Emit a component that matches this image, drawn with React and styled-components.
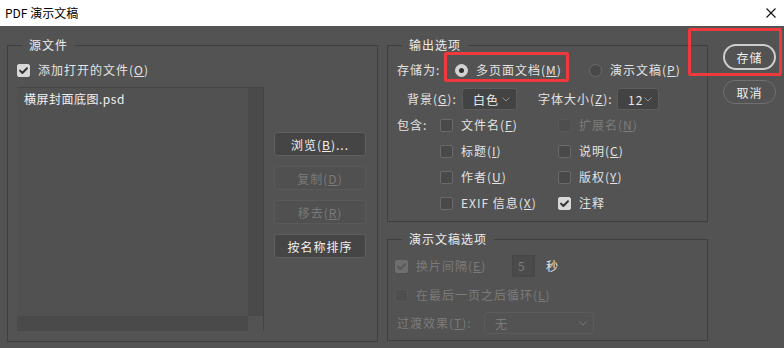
import React from "react";
import styled, { createGlobalStyle } from "styled-components";

//* Global *//
const GlobalStyle = createGlobalStyle`
  html, body {
    margin: 0;
    padding: 0;
    background: #535353;
  }
  body {
    font-family: "Noto Sans CJK SC", "Noto Sans", sans-serif;
    font-size: 12px;
  }
`;

//* Small parts *//
const CheckMark = ({ color }) => (
  <svg width="13" height="13" viewBox="0 0 13 13">
    <polyline
      points="3,6.6 5.4,9 10,4.2"
      fill="none"
      stroke={color}
      strokeWidth="2"
      strokeLinecap="round"
      strokeLinejoin="round"
    />
  </svg>
);

const Check = ({ checked, disabled }) => (
  <CheckBox $checked={checked} $disabled={disabled}>
    {checked && <CheckMark color={disabled ? "#585858" : "#363636"} />}
  </CheckBox>
);

const Chevron = () => (
  <svg width="8" height="5" viewBox="0 0 8 5">
    <polyline points="0.5,0.5 4,4 7.5,0.5" fill="none" stroke="#8e8e8e" strokeWidth="1" />
  </svg>
);

const Key = ({ children }) => <u>{children}</u>;

const CheckItem = ({ checked, disabled, children }) => (
  <Option>
    <Check checked={checked} disabled={disabled} />
    <Label $disabled={disabled}>{children}</Label>
  </Option>
);

const App = () => {
  return (
    <Window>
      <GlobalStyle />
      <TitleBar>
        <Title>PDF 演示文稿</Title>
        <svg width="10" height="10" viewBox="0 0 10 10">
          <path d="M0.5 0.5 L9.5 9.5 M9.5 0.5 L0.5 9.5" stroke="#111" strokeWidth="1.1" />
        </svg>
      </TitleBar>

      <Main>
        <Group $w={371} $pad="9px 11px 10px 9px">
          <Legend $left={5}>源文件</Legend>
          <Option>
            <Check checked />
            <Label>
              添加打开的文件(<Key>O</Key>)
            </Label>
          </Option>
          <SourceArea>
            <ListBox>
              <ListItems>
                <ListItem>横屏封面底图.psd</ListItem>
              </ListItems>
              <VScroll />
              <HScroll />
            </ListBox>
            <ButtonColumn>
              <Button>
                浏览(<Key>B</Key>)...
              </Button>
              <Button disabled>
                复制(<Key>D</Key>)
              </Button>
              <Button disabled>
                移去(<Key>R</Key>)
              </Button>
              <Button>按名称排序</Button>
            </ButtonColumn>
          </SourceArea>
        </Group>

        <MiddleColumn>
          <Group $w={321} $pad="5px 9px 5px 9px">
            <Legend $left={5}>输出选项</Legend>
            <Row $h={24}>
              <FieldLabel $w={58}>存储为:</FieldLabel>
              <Option $w={134}>
                <Radio $on />
                <Label>
                  多页面文档(<Key>M</Key>)
                </Label>
              </Option>
              <Option>
                <Radio />
                <Label>
                  演示文稿(<Key>P</Key>)
                </Label>
              </Option>
            </Row>
            <Row $h={22} $top={6} $left={10}>
              <FieldLabel $w={55}>
                背景(<Key>G</Key>):
              </FieldLabel>
              <Select $w={55}>
                <span>白色</span>
                <Chevron />
              </Select>
              <FieldLabel $w={79} $left={21}>
                字体大小(<Key>Z</Key>):
              </FieldLabel>
              <Select $w={42}>
                <span>12</span>
                <Chevron />
              </Select>
            </Row>
            <IncludeGrid>
              <FieldLabel>包含:</FieldLabel>
              <CheckItem>
                文件名(<Key>F</Key>)
              </CheckItem>
              <CheckItem disabled>
                扩展名(<Key>N</Key>)
              </CheckItem>
              <span />
              <CheckItem>
                标题(<Key>I</Key>)
              </CheckItem>
              <CheckItem>
                说明(<Key>C</Key>)
              </CheckItem>
              <span />
              <CheckItem>
                作者(<Key>U</Key>)
              </CheckItem>
              <CheckItem>
                版权(<Key>Y</Key>)
              </CheckItem>
              <span />
              <CheckItem>
                EXIF 信息(<Key>X</Key>)
              </CheckItem>
              <CheckItem checked>注释</CheckItem>
            </IncludeGrid>
          </Group>

          <Group $w={321} $pad="8px 9px 6px 7px" $top={9}>
            <Legend $left={7}>演示文稿选项</Legend>
            <Row $h={22}>
              <Option>
                <Check checked disabled />
                <Label $disabled $w={96}>
                  换片间隔(<Key>E</Key>)
                </Label>
              </Option>
              <NumberBox>5</NumberBox>
              <Label>秒</Label>
            </Row>
            <Row $h={22} $top={7}>
              <CheckItem disabled>
                在最后一页之后循环(<Key>L</Key>)
              </CheckItem>
            </Row>
            <Row $h={22} $top={6} $left={2}>
              <FieldLabel $w={87} $disabled>
                过渡效果(<Key>T</Key>):
              </FieldLabel>
              <Select $w={110} $disabled>
                <span>无</span>
                <Chevron />
              </Select>
            </Row>
          </Group>
        </MiddleColumn>

        <ActionColumn>
          <PillButton $primary>存储</PillButton>
          <PillButton>取消</PillButton>
        </ActionColumn>
      </Main>

      <Highlight style={{ left: 444, top: 52, width: 125, height: 30 }} />
      <Highlight style={{ left: 688, top: 28, width: 94, height: 48 }} />
    </Window>
  );
};

export default App;

//* Styled Components *//

const Window = styled.div`
  position: relative;
  width: 784px;
  height: 348px;
  overflow: hidden;
  background: #535353;
  display: flex;
  flex-direction: column;
`;

const TitleBar = styled.div`
  height: 26px;
  flex: none;
  background: #ffffff;
  display: flex;
  align-items: center;
  justify-content: space-between;
  padding: 0 8px 0 5px;
`;

const Title = styled.span`
  color: #000;
  font-size: 12px;
  line-height: 16px;
`;

const Main = styled.div`
  display: flex;
  align-items: flex-start;
  padding: 11px 0 0 7px;
`;

const Group = styled.fieldset`
  box-sizing: border-box;
  width: ${(p) => p.$w}px;
  min-width: 0;
  margin: ${(p) => p.$top || 0}px 0 0 0;
  padding: ${(p) => p.$pad};
  border: 1px solid #3f3f3f;
`;

const Legend = styled.legend`
  margin-left: ${(p) => p.$left}px;
  padding: 0 7px;
  line-height: 16px;
  color: #ececec;
  letter-spacing: 1px;
`;

const Option = styled.div`
  display: flex;
  align-items: center;
  gap: 8px;
  height: 16px;
  ${(p) => p.$w && `width: ${p.$w}px;`}
`;

const Label = styled.span`
  color: ${(p) => (p.$disabled ? "#7b7b7b" : "#e3e3e3")};
  letter-spacing: 1px;
  line-height: 16px;
  white-space: nowrap;
  ${(p) => p.$w && `width: ${p.$w}px;`}
`;

const FieldLabel = styled(Label)`
  flex: none;
  ${(p) => p.$w && `width: ${p.$w}px;`}
  ${(p) => p.$left && `margin-left: ${p.$left}px;`}
`;

const CheckBox = styled.span`
  box-sizing: border-box;
  flex: none;
  width: 13px;
  height: 13px;
  border-radius: 2px;
  display: flex;
  align-items: center;
  justify-content: center;
  background: ${(p) =>
    p.$checked ? (p.$disabled ? "#6e6e6e" : "#d8d8d8") : p.$disabled ? "#4e4e4e" : "#494949"};
  border: 1px solid
    ${(p) =>
      p.$checked ? (p.$disabled ? "#6e6e6e" : "#d8d8d8") : p.$disabled ? "#585858" : "#6a6a6a"};
  svg {
    margin: -1px;
  }
`;

const Radio = styled.span`
  box-sizing: border-box;
  flex: none;
  width: 13px;
  height: 13px;
  border-radius: 50%;
  position: relative;
  background: ${(p) => (p.$on ? "#d2d2d2" : "#494949")};
  border: 1px solid ${(p) => (p.$on ? "#d2d2d2" : "#6a6a6a")};

  &::after {
    content: "";
    display: ${(p) => (p.$on ? "block" : "none")};
    position: absolute;
    left: 3px;
    top: 3px;
    width: 5px;
    height: 5px;
    border-radius: 50%;
    background: #2e2e2e;
  }
`;

const SourceArea = styled.div`
  display: flex;
  gap: 10px;
  margin-top: 9px;
`;

const ListBox = styled.div`
  box-sizing: border-box;
  width: 247px;
  height: 244px;
  display: grid;
  grid-template-columns: 1fr 15px;
  grid-template-rows: 1fr 15px;
  border-top: 1px solid #464646;
  border-right: 1px solid #444444;
  background: #535353;
`;

const ListItems = styled.div`
  background: #515151;
  padding: 3px 7px;
`;

const ListItem = styled.div`
  color: #f0f0f0;
  line-height: 16px;
  letter-spacing: 0.5px;
`;

const VScroll = styled.div`
  background: #4a4a4a;
`;

const HScroll = styled.div`
  background: #4a4a4a;
`;

const ButtonColumn = styled.div`
  display: flex;
  flex-direction: column;
  gap: 10px;
  padding-top: 45px;
`;

const Button = styled.button`
  box-sizing: border-box;
  width: 92px;
  height: 24px;
  padding: 0;
  border-radius: 3px;
  border: 1px solid ${(p) => (p.disabled ? "#5a5a5a" : "#5f5f5f")};
  background: ${(p) => (p.disabled ? "#505050" : "#454545")};
  color: ${(p) => (p.disabled ? "#7a7a7a" : "#f0f0f0")};
  font-family: inherit;
  font-size: 12px;
  letter-spacing: 1px;
`;

const MiddleColumn = styled.div`
  display: flex;
  flex-direction: column;
  margin-left: 9px;
`;

const Row = styled.div`
  display: flex;
  align-items: center;
  height: ${(p) => p.$h}px;
  margin-top: ${(p) => p.$top || 0}px;
  padding-left: ${(p) => p.$left || 0}px;
`;

const Select = styled.div`
  box-sizing: border-box;
  flex: none;
  width: ${(p) => p.$w}px;
  height: 22px;
  display: flex;
  align-items: center;
  justify-content: space-between;
  padding: 0 6px 0 10px;
  border-radius: 3px;
  border: 1px solid ${(p) => (p.$disabled ? "#5b5b5b" : "#5c5c5c")};
  background: ${(p) => (p.$disabled ? "#535353" : "#434343")};
  color: ${(p) => (p.$disabled ? "#7b7b7b" : "#e8e8e8")};
  letter-spacing: 1px;
  svg {
    opacity: ${(p) => (p.$disabled ? 0.6 : 1)};
  }
`;

const IncludeGrid = styled.div`
  display: grid;
  grid-template-columns: 43px 118px auto;
  grid-auto-rows: 26px;
  align-items: center;
  margin-top: 2px;
`;

const NumberBox = styled.div`
  box-sizing: border-box;
  width: 23px;
  height: 22px;
  margin-right: 11px;
  padding-left: 4px;
  border: 2px solid #484848;
  background: #4b4b4b;
  color: #7b7b7b;
  line-height: 18px;
`;

const ActionColumn = styled.div`
  display: flex;
  flex-direction: column;
  gap: 10px;
  margin-left: 15px;
  padding-top: 7px;
`;

const PillButton = styled.button`
  box-sizing: border-box;
  width: 53px;
  height: ${(p) => (p.$primary ? 26 : 24)}px;
  padding: 0;
  border-radius: 13px;
  border: ${(p) => (p.$primary ? "2px solid #cdcdcd" : "1px solid #707070")};
  background: #535353;
  color: #f0f0f0;
  font-family: inherit;
  font-size: 12px;
  letter-spacing: 1px;
`;

const Highlight = styled.div`
  position: absolute;
  box-sizing: border-box;
  border: 3px solid #ee3a3d;
  border-radius: 2px;
  pointer-events: none;
`;
